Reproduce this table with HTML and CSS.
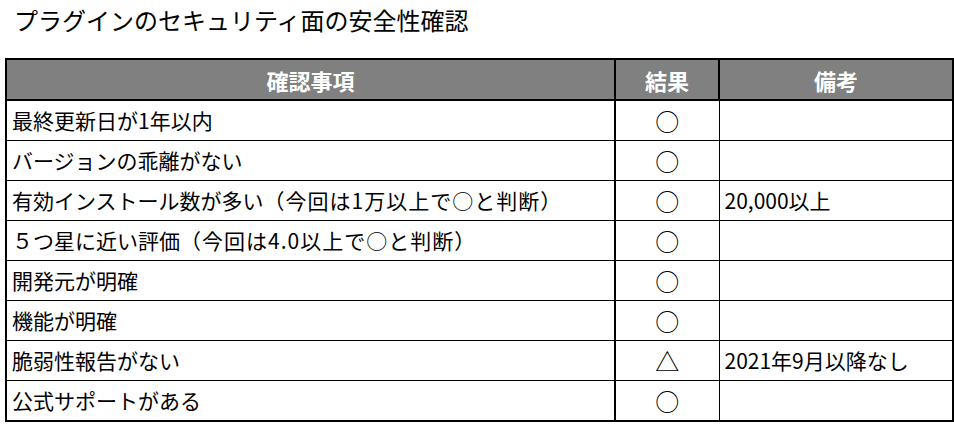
FILE: index.html
```html
<!DOCTYPE html>
<html lang="ja">
<head>
  <meta charset="UTF-8" />
  <title>プラグインのセキュリティ面の安全性確認</title>
  <link rel="stylesheet" href="styles.css">
</head>
<body>
  <h1 class="title">プラグインのセキュリティ面の安全性確認</h1>

  <table class="check">
    <colgroup>
      <col class="col-item">
      <col class="col-result">
      <col class="col-note">
    </colgroup>
    <thead>
      <tr>
        <th>確認事項</th>
        <th class="result">結果</th>
        <th>備考</th>
      </tr>
    </thead>
    <tbody>
      <tr>
        <td>最終更新日が1年以内</td>
        <td class="result">○</td>
        <td></td>
      </tr>
      <tr>
        <td>バージョンの乖離がない</td>
        <td class="result">○</td>
        <td></td>
      </tr>
      <tr>
        <td>有効インストール数が多い<span class="wide">（今回は1万以上で○と判断）</span></td>
        <td class="result">○</td>
        <td>20,000以上</td>
      </tr>
      <tr>
        <td>５つ星に近い評価<span class="wide">（今回は4.0以上で○と判断）</span></td>
        <td class="result">○</td>
        <td></td>
      </tr>
      <tr>
        <td>開発元が明確</td>
        <td class="result">○</td>
        <td></td>
      </tr>
      <tr>
        <td>機能が明確</td>
        <td class="result">○</td>
        <td></td>
      </tr>
      <tr>
        <td>脆弱性報告がない</td>
        <td class="result">△</td>
        <td>2021年9月以降なし</td>
      </tr>
      <tr>
        <td>公式サポートがある</td>
        <td class="result">○</td>
        <td></td>
      </tr>
    </tbody>
  </table>
</body>
</html>
```

FILE: styles.css
```css
body {
  margin: 0;
  padding: 0 0 0 5px;
  font-family: "Noto Sans CJK JP", "Noto Sans", sans-serif;
  color: #000;
  background: #fff;
}
.title {
  margin: 0;
  padding: 3px 0 0 9px;
  height: 58px;
  box-sizing: border-box;
  font-size: 24px;
  font-weight: normal;
  line-height: 34px;
}
.check {
  border-collapse: collapse;
  width: 949px;
  table-layout: fixed;
  border: 2px solid #000;
  font-size: 21px;
}
.col-item {
  width: 609px;
}
.col-result {
  width: 104px;
}
.check th {
  background: #808080;
  color: #fff;
  font-size: 22px;
  font-weight: bold;
  height: 39px;
  padding: 0;
  border-left: 2px solid #000;
  border-bottom: 2px solid #000;
  line-height: 1;
}
.check td {
  height: 39px;
  padding: 0 0 0 5px;
  border: 1px solid #000;
  line-height: 1;
  white-space: nowrap;
}
.check .wide {
  letter-spacing: 1px;
}
.check td.result {
  font-size: 24px;
}
.check .result {
  text-align: center;
  padding: 0;
  border-left: 2px solid #000;
}
```
